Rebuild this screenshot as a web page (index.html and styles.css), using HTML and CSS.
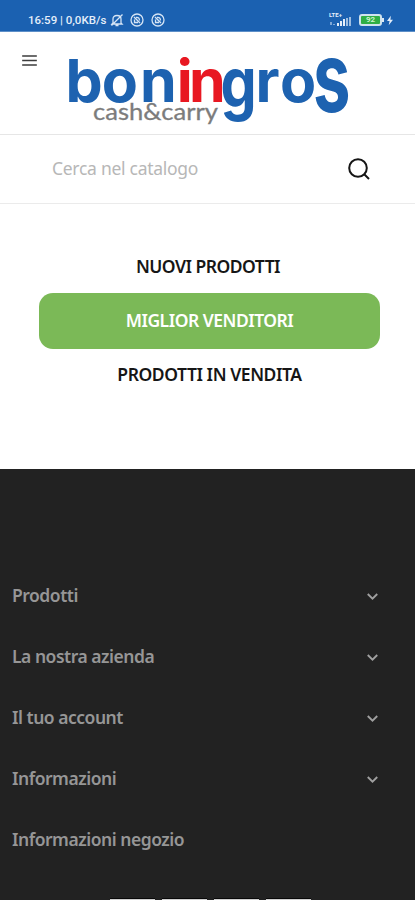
FILE: index.html
```html
<!DOCTYPE html>
<html lang="it">
<head>
<meta charset="utf-8">
<meta name="viewport" content="width=device-width">
<title>Boningros</title>
<link rel="stylesheet" href="styles.css">
</head>
<body>
<div class="status">
  <span class="clock">16:59 | 0,0KB/s</span>
  <svg class="bell" viewBox="0 0 14 14"><path d="M3 10V6Q3 2.500 7 2.500Q11 2.500 11 6V10L12 11H2ZM5.500 12.500H8.500M1.500 12.500L12.500 1.500"/></svg>
  <svg class="ring" viewBox="0 0 14 14"><circle cx="7" cy="7" r="6"/><path d="M4 4L10 10M4.500 6.500V9.500H8M6 4.500Q9.500 4 9.500 7.500"/></svg>
  <svg class="ring" viewBox="0 0 14 14"><circle cx="7" cy="7" r="6"/><path d="M4 4L10 10M4.500 6.500V9.500H8M6 4.500Q9.500 4 9.500 7.500"/></svg>
  <div class="signal"><span>LTE+</span><svg viewBox="0 0 22 9"><path d="M2 5V8M5 7V8" opacity=".5"/><path d="M9 6V9M12 4V9M15 2V9"/><path d="M18 1V9M21 0V9" opacity=".65"/></svg></div>
  <div class="battery"><span>92</span></div>
  <svg class="bolt" viewBox="0 0 7 11"><path d="M4.500 0L0 6H3L2 11L7 4.500H4Z"/></svg>
</div>
<header class="header">
  <svg class="menu" viewBox="0 0 16 12"><path d="M0 1H16M0 6H16M0 11H16"/></svg>
  <svg class="logo" viewBox="0 0 284 72" role="img" aria-label="boningros cash&amp;carry">
    <text class="word" y="47.500" x="-2.500 33.800 72">bon</text>
    <text class="word red" y="47.500" x="108.800 121">in</text>
    <text class="word" transform="translate(152.500 53) scale(.97 1.17)">g</text>
    <text class="word" y="47.500" x="187.500 212">ro</text>
    <text class="word last" y="57.500" x="245" textLength="37.500" lengthAdjust="spacingAndGlyphs">s</text>
    <text class="tag" x="25" y="65.500" textLength="125" lengthAdjust="spacingAndGlyphs">cash&amp;carry</text>
  </svg>
</header>
<div class="search">
  <span>Cerca nel catalogo</span>
  <svg viewBox="0 0 22 22"><circle cx="10" cy="10" r="8.800"/><path d="M16.500 16.500L21 21"/></svg>
</div>
<main class="tabs">
  <a class="tab">NUOVI PRODOTTI</a>
  <a class="tab active">MIGLIOR VENDITORI</a>
  <a class="tab last-tab">PRODOTTI IN VENDITA</a>
</main>
<footer class="footer">
  <div class="row"><span>Prodotti</span><svg viewBox="0 0 10 6"><path d="M.700 .700L5 5L9.300 .700"/></svg></div>
  <div class="row"><span>La nostra azienda</span><svg viewBox="0 0 10 6"><path d="M.700 .700L5 5L9.300 .700"/></svg></div>
  <div class="row"><span>Il tuo account</span><svg viewBox="0 0 10 6"><path d="M.700 .700L5 5L9.300 .700"/></svg></div>
  <div class="row"><span>Informazioni</span><svg viewBox="0 0 10 6"><path d="M.700 .700L5 5L9.300 .700"/></svg></div>
  <div class="row"><span>Informazioni negozio</span></div>
  <div class="social"><i></i><i></i><i></i><i></i></div>
</footer>
</body>
</html>
```
FILE: styles.css
```css
* { box-sizing: border-box; }
body { margin: 0; width: 415px; height: 900px; overflow: hidden; background: #fff; font-family: "Noto Sans", sans-serif; }
svg { display: block; fill: none; overflow: visible; }
.status { height: 32px; padding: 9px 22px 0 28px; background: #1b61b1; border-bottom: 1px solid #5d8fc8; display: flex; align-items: center; color: #e4eefa; }
.clock { font: 500 11.5px/22px Roboto, sans-serif; width: 82px; white-space: nowrap; }
.bell, .ring { width: 14px; height: 14px; stroke: #d5e4f5; stroke-width: 1.3; margin-right: 7px; }
.bell { margin-right: 6px; }
.signal { width: 23px; height: 16px; margin-left: auto; }
.signal span { display: block; font: 700 6px/6px Roboto, sans-serif; height: 5px; }
.signal svg { width: 22px; height: 9px; stroke: #e4eefa; stroke-width: 2; }
.battery { width: 23px; height: 12px; margin: 0 5px 0 7px; border: 2px solid #cfe3ee; border-radius: 3px; background: #2fae45; text-align: center; position: relative; }
.battery::after { content: ""; position: absolute; right: -4px; top: 2px; width: 2px; height: 4px; background: #dbe9f5; }
.battery span { display: block; font: 700 8px/8px Roboto, sans-serif; color: #c9f5c9; }
.bolt { width: 6px; height: 11px; fill: #e4eefa; }
.header { height: 103px; border-bottom: 1px solid #e6e6e6; display: flex; padding: 23px 0 0 22px; }
.menu { width: 15px; height: 11px; stroke: #3c3c3c; stroke-width: 1.6; }
.logo { width: 284px; height: 72px; margin-left: 31px; margin-top: -1px; }
.word { font: 700 59px Inter, sans-serif; fill: #1d62b0; }
.red { fill: #e81822; }
.last { font-size: 98px; }
.tag { font: 400 23px Lato, sans-serif; fill: #7c7c7c; stroke: #7c7c7c; stroke-width: .3; }
.search { height: 69px; border-bottom: 1px solid #ebebeb; display: flex; align-items: center; justify-content: space-between; padding: 0 45px 0 52px; font-size: 17.5px; letter-spacing: -.28px; color: #b7b7b7; }
.search span { padding-bottom: 2px; }
.search svg { width: 22px; height: 22px; stroke: #151515; stroke-width: 2; }
.tabs { height: 265px; padding: 35px 35px 0 39px; }
.tab { display: flex; align-items: center; justify-content: center; height: 54px; padding: 0 3px 1px 0; font-size: 17.5px; font-weight: 600; letter-spacing: -.5px; color: #161616; white-space: nowrap; }
.active { height: 56px; padding: 0 0 2px; background: #7bb957; color: #fff; border-radius: 14px; }
.last-tab { height: 52px; padding: 0 0 2px; letter-spacing: -.43px; }
.footer { height: 431px; background: #222; padding: 96px 37px 0 12px; }
.row { height: 61px; display: flex; align-items: center; justify-content: space-between; color: #969696; font-size: 17.5px; font-weight: 600; letter-spacing: -.48px; white-space: nowrap; }
.row span { padding-bottom: 2px; }
.row svg { width: 11px; height: 7px; margin-top: 2px; stroke: #a0a0a0; stroke-width: 1.7; }
.social { display: flex; gap: 7px; margin: 28px 0 0 98px; }
.social i { width: 45px; height: 3px; background: #d0d0d0; border-top: 1px solid #080808; }
```
